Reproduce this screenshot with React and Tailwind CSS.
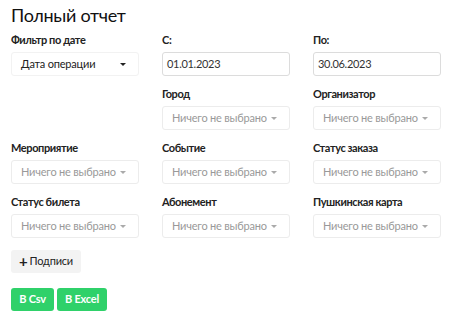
import React from "react";

const Caret = ({ dark }) => (
  <span
    className={`inline-block w-0 h-0 border-l-[3.5px] border-r-[3.5px] border-t-[3.5px] border-l-transparent border-r-transparent ${
      dark ? "border-t-[#222]" : "border-t-[#aaa]"
    }`}
  ></span>
);

const Field = ({ label, children }) => (
  <div className="flex flex-col">
    <div className="h-4 leading-4 text-[11px] tracking-[-0.4px] font-bold text-[#222] mb-1 whitespace-nowrap">{label}</div>
    {children}
  </div>
);

const EmptySelect = () => (
  <div className="h-6 border border-[#ececec] rounded-[3px] bg-white flex items-center justify-between pl-[9px] pr-[12px] text-[11px] tracking-[-0.2px] text-[#999] whitespace-nowrap">
    <span>Ничего не выбрано</span>
    <Caret />
  </div>
);

const DateInput = ({ value }) => (
  <div className="h-6 border border-[#dcdcdc] rounded-[3px] bg-white flex items-center px-[4px] text-[11px] tracking-[-0.3px] text-[#333]">
    {value}
  </div>
);

const App = () => {
  return (
    <div
      className="w-[450px] h-[317px] bg-white pl-[11px] pr-[10px] pt-[3px]"
      style={{ fontFamily: "Lato, 'Noto Sans', sans-serif" }}
    >
      {/* Header */}
      <h1 className="text-[18px] tracking-[-0.3px] leading-6 text-[#111] mb-[5px]">Полный отчет</h1>

      {/* Filters grid */}
      <div className="grid grid-cols-[128px_128px_128px] gap-x-[23px] gap-y-[10px]">
        <Field label="Фильтр по дате">
          <div className="h-6 rounded-[3px] bg-white border border-[#f2f2f2] flex items-center justify-between pl-[9px] pr-[12px] text-[11px] tracking-[-0.2px] text-[#222]">
            <span>Дата операции</span>
            <Caret dark />
          </div>
        </Field>
        <Field label="С:">
          <DateInput value="01.01.2023" />
        </Field>
        <Field label="По:">
          <DateInput value="30.06.2023" />
        </Field>

        <div></div>
        <Field label="Город">
          <EmptySelect />
        </Field>
        <Field label="Организатор">
          <EmptySelect />
        </Field>

        <Field label="Мероприятие">
          <EmptySelect />
        </Field>
        <Field label="Событие">
          <EmptySelect />
        </Field>
        <Field label="Статус заказа">
          <EmptySelect />
        </Field>

        <Field label="Статус билета">
          <EmptySelect />
        </Field>
        <Field label="Абонемент">
          <EmptySelect />
        </Field>
        <Field label="Пушкинская карта">
          <EmptySelect />
        </Field>
      </div>

      {/* Subscriptions button */}
      <button className="mt-[12px] h-[23px] w-[70px] rounded-[3px] bg-[#f3f3f3] text-[11px] tracking-[-0.2px] text-[#222] flex items-center justify-center gap-[2px]">
        <span className="font-bold text-[15px] leading-none">+</span>
        <span>Подписи</span>
      </button>

      {/* Export buttons */}
      <div className="mt-[15px] flex gap-[3px]">
        <button className="h-[23px] w-[43px] rounded-[3px] bg-[#2fd16a] text-white text-[11px] tracking-[-0.2px] font-bold">
          В Csv
        </button>
        <button className="h-[23px] w-[50px] rounded-[3px] bg-[#2fd16a] text-white text-[11px] tracking-[-0.2px] font-bold">
          В Excel
        </button>
      </div>
    </div>
  );
};

export default App;
